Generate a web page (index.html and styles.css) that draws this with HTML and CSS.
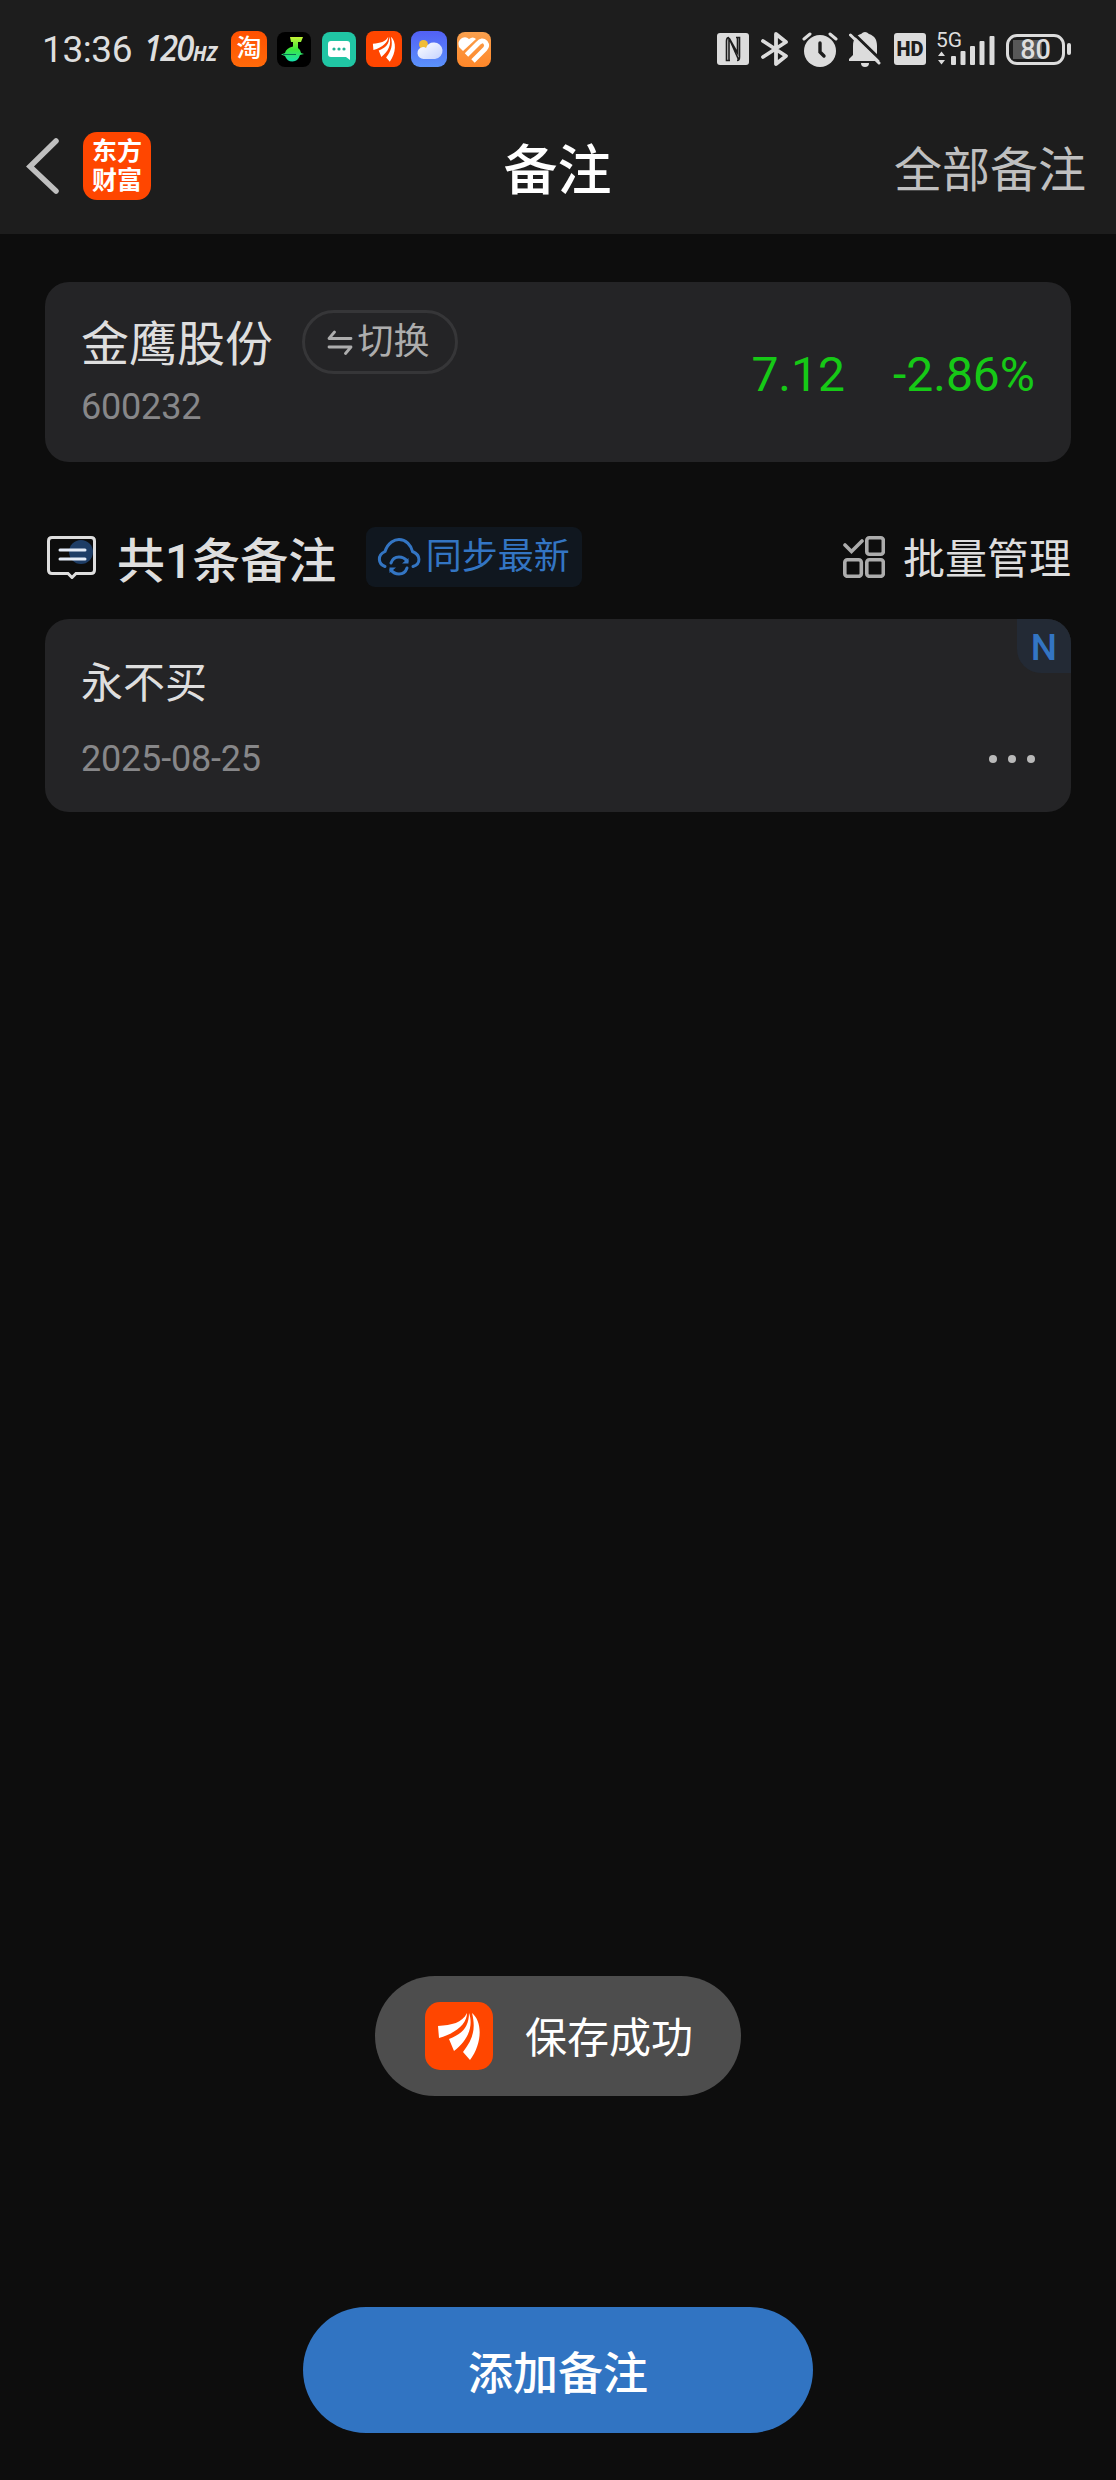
FILE: index.html
```html
<!DOCTYPE html>
<html lang="zh-CN">
  <head>
    <meta charset="UTF-8" />
    <meta name="viewport" content="width=device-width, initial-scale=1.0" />
    <title>备注</title>
    <link rel="stylesheet" href="styles.css">
  </head>
  <body>
    <div class="page">
      <header class="top">
        <div class="status-bar">
          <span class="time">13:36</span>
          <span class="rate">120<small>HZ</small></span>
          <div class="apps">
            <div class="app app-taobao">淘</div>
            <svg class="app" viewBox="0 0 36 36">
              <defs>
                <linearGradient id="note" x1="0" y1="0" x2="0" y2="1">
                  <stop offset="0" stop-color="#c6f536" />
                  <stop offset="0.500" stop-color="#3ee83c" />
                  <stop offset="1" stop-color="#16e0b0" />
                </linearGradient>
              </defs>
              <rect x="1" y="1" width="34" height="35" rx="8" fill="#000" />
              <path d="M14 6H27L25 11H22V17Q25 19 25 22L28 23L24 24Q22 30.500 16.500 30.500Q11 30.500 9 25L5 23.500L9 22Q10 17 17 15.500V11H15Z" fill="url(#note)" />
              <path d="M7 23.500H20" stroke="#087052" stroke-width="1" />
            </svg>
            <svg class="app" viewBox="0 0 36 36">
              <rect x="1" y="1" width="34" height="35" rx="8" fill="#20c6a4" />
              <path d="M10 10H26Q29 10 29 13V29L25 26H10Q7 26 7 23V13Q7 10 10 10Z" fill="#fff" />
              <g fill="#20b497">
                <circle cx="13" cy="18" r="1.600" />
                <circle cx="18" cy="18" r="1.600" />
                <circle cx="23" cy="18" r="1.600" />
              </g>
            </svg>
            <svg class="app" viewBox="0 0 68 68">
              <rect width="68" height="68" rx="15" fill="#ff4600" />
              <g id="wing" fill="#fff">
                <path d="M42 11C42 21 32 31 14 36L13 24C27 23 37 21 42 11Z" />
                <path d="M44 11C49 25 42 39 29 49L24 37C37 32 44 25 44 11Z" />
                <path d="M47 11C58 20 57 42 45 58L38 50C48 37 51 27 47 11Z" />
              </g>
            </svg>
            <svg class="app" viewBox="0 0 36 36">
              <defs>
                <linearGradient id="sky" x1="0" y1="0" x2="0" y2="1">
                  <stop offset="0" stop-color="#5260f5" />
                  <stop offset="1" stop-color="#5b92fb" />
                </linearGradient>
                <linearGradient id="cloud" x1="0" y1="0" x2="1" y2="1">
                  <stop offset="0" stop-color="#fff" />
                  <stop offset="1" stop-color="#c4d2ff" />
                </linearGradient>
              </defs>
              <rect width="36" height="36" rx="9" fill="url(#sky)" />
              <circle cx="12.500" cy="13.500" r="4.500" fill="#f0bd37" />
              <path d="M13 28A6 6 0 0 1 12 16Q14 16 15 17Q17 11.500 22.500 11.500A8 8 0 0 1 24 28Z" fill="url(#cloud)" />
            </svg>
            <svg class="app" viewBox="0 0 36 36">
              <defs>
                <linearGradient id="amber" x1="0" y1="0" x2="0" y2="1">
                  <stop offset="0" stop-color="#f9a04e" />
                  <stop offset="1" stop-color="#ff8729" />
                </linearGradient>
              </defs>
              <rect x="1" y="1" width="34" height="35" rx="8" fill="url(#amber)" />
              <path d="M3 16Q1 10 6 7Q10 5 13 8Q17 5 20 8L7 20Z" fill="#fff" />
              <path d="M10.500 24L22 12.500Q26 8 29.500 11.500Q32 15 29 18L17 30" fill="none" stroke="#fff" stroke-width="4.800" />
            </svg>
          </div>
          <div class="signals">
            <svg width="32" height="32" viewBox="0 0 32 32">
              <rect width="32" height="32" rx="3" fill="#dcdcdc" />
              <path d="M12 4.500Q9.500 4.500 9.500 8V27.500H13M12 27V5L21.500 26.500M19 4.500H22.500V24Q22.500 27.500 20 27.500M20.500 5V20L12 5" fill="none" stroke="#1d1d1d" stroke-width="1.600" />
            </svg>
            <svg class="bluetooth" width="28" height="34" viewBox="0 0 28 34">
              <path d="M2 9L25 24L15 32V2L25 10L2 25" fill="none" stroke="#dcdcdc" stroke-width="3.800" stroke-linecap="round" stroke-linejoin="round" />
            </svg>
            <svg class="alarm" width="36" height="35" viewBox="0 0 36 35">
              <circle cx="18" cy="19" r="16" fill="#dcdcdc" />
              <path d="M2 7L8 2M28 2L34 7" stroke="#dcdcdc" stroke-width="3" stroke-linecap="round" />
              <path d="M18 11V20L22 24" fill="none" stroke="#1d1d1d" stroke-width="3.400" stroke-linecap="round" />
            </svg>
            <svg class="bell" width="32" height="36" viewBox="0 0 32 36">
              <path d="M0 30V28L4 24V15C4 7 8 4 12 3Q16 -1 20 3C26 5 28 9 28 15V25L31 30Z" fill="#dcdcdc" />
              <path d="M12 32H20Q20 36 16 36Q12 36 12 32Z" fill="#dcdcdc" />
              <path d="M3 1L33 30" stroke="#1d1d1d" stroke-width="3" />
              <path d="M1.500 4L30 32" stroke="#dcdcdc" stroke-width="3" stroke-linecap="round" />
            </svg>
            <div class="hd">HD</div>
            <div class="cell">
              <span class="cell-type">5G</span>
              <svg width="60" height="34" viewBox="0 0 60 34">
                <g fill="#dcdcdc">
                  <path d="M1 24L4.500 19.500L8 24ZM1 28H8L4.500 32.500Z" />
                  <rect x="14" y="24" width="5" height="9" rx="1" />
                  <rect x="23.500" y="19" width="5" height="14" rx="1" />
                  <rect x="33" y="14" width="5" height="19" rx="1" />
                  <rect x="42.500" y="9" width="5" height="24" rx="1" />
                  <rect x="52.500" y="4" width="5" height="29" rx="1" />
                </g>
              </svg>
            </div>
            <div class="battery">80</div>
            <div class="battery-tip"></div>
          </div>
        </div>
        <nav class="nav">
          <div class="nav-left">
            <svg width="34" height="56" viewBox="0 0 34 56">
              <path d="M30 3L4 28.500L30 53" fill="none" stroke="#bfbfbf" stroke-width="5.500" stroke-linecap="round" />
            </svg>
            <div class="brand">东方<br />财富</div>
          </div>
          <h1 class="nav-title">备注</h1>
          <div class="nav-right">全部备注</div>
        </nav>
      </header>

      <main class="content">
        <section class="card stock">
          <div class="stock-info">
            <div class="stock-head">
              <span class="stock-name">金鹰股份</span>
              <div class="switch">
                <svg width="26" height="26" viewBox="0 0 26 26">
                  <path d="M24 9.500H2L7.500 3M2 18H24L18.500 24.500" fill="none" stroke="#adadad" stroke-width="2.800" stroke-linecap="round" stroke-linejoin="round" />
                </svg>
                <span>切换</span>
              </div>
            </div>
            <div class="stock-code">600232</div>
          </div>
          <div class="quote">
            <span>7.12</span>
            <span>-2.86%</span>
          </div>
        </section>

        <div class="toolbar">
          <svg class="bubble" width="50" height="44" viewBox="0 0 50 44">
            <circle cx="34" cy="17" r="12" fill="#1e3d66" />
            <path d="M5 2.500H44Q47.500 2.500 47.500 6V35Q47.500 38.500 44 38.500H29L25 42.500L21 38.500H5Q1.500 38.500 1.500 35V6Q1.500 2.500 5 2.500Z" fill="none" stroke="#dedede" stroke-width="3" />
            <path d="M13 15H38M13 24H38" stroke="#e3ebf7" stroke-width="3" stroke-linecap="round" />
          </svg>
          <h2 class="count">共1条备注</h2>
          <div class="sync">
            <svg width="44" height="40" viewBox="0 0 44 40">
              <g fill="none" stroke="#3375c3" stroke-width="3" stroke-linecap="round">
                <path d="M8 29.500C1 27 0 18 8 14.500C11 5 18 2.500 22 2.500C29 2.500 34 8 35.500 14.500C44 18 44 27 36 29.500" />
                <path d="M14 26Q16 20 22 20Q27 20 30 24M30 31Q28 37 22 37Q17 37 14 33" />
              </g>
              <path d="M31.500 21V26.500H25ZM12.500 36V30.500H19Z" fill="#3375c3" />
            </svg>
            <span>同步最新</span>
          </div>
          <div class="batch">
            <svg width="42" height="42" viewBox="0 0 42 42">
              <g fill="none" stroke="#acacac" stroke-width="3.600">
                <path d="M2 9L8.500 15.500L19 5" stroke-linecap="round" />
                <rect x="23.800" y="1.800" width="16.500" height="16.500" rx="2.500" />
                <rect x="1.800" y="23.800" width="16.500" height="16.500" rx="2.500" />
                <rect x="23.800" y="23.800" width="16.500" height="16.500" rx="2.500" />
              </g>
            </svg>
            <span>批量管理</span>
          </div>
        </div>

        <section class="card note">
          <div class="note-tag">N</div>
          <p class="note-text">永不买</p>
          <div class="note-foot">
            <span>2025-08-25</span>
            <div class="more"><i></i><i></i><i></i></div>
          </div>
        </section>
      </main>

      <div class="toast">
        <svg width="68" height="68" viewBox="0 0 68 68">
          <rect width="68" height="68" rx="15" fill="#ff4600" />
          <use href="#wing" />
        </svg>
        <span>保存成功</span>
      </div>

      <button class="add">添加备注</button>
    </div>
  </body>
</html>
```

FILE: styles.css
```css
* {
  box-sizing: border-box;
}
body {
  margin: 0;
  background-color: #0d0d0d;
  font-family: Roboto, "Noto Sans CJK SC", sans-serif;
  color: #dedede;
}
svg {
  display: block;
  flex-shrink: 0;
}
h1,
h2,
p {
  margin: 0;
}
.page {
  height: 2480px;
  display: flex;
  flex-direction: column;
  align-items: center;
}
.top {
  width: 100%;
  height: 234px;
  background-color: #1d1d1d;
}
.status-bar {
  height: 98px;
  padding: 0 45px 0 42px;
  display: flex;
  align-items: center;
}
.time {
  width: 102px;
  font-size: 37px;
  letter-spacing: -0.4px;
}
.rate {
  width: 87px;
  padding-top: 2px;
  font-family: "Open Sans", sans-serif;
  font-size: 36px;
  font-style: italic;
  font-weight: 600;
  letter-spacing: -1.8px;
  line-height: 40px;
  white-space: nowrap;
  transform: scaleX(0.9);
  transform-origin: left;
}
.rate small {
  font-size: 22px;
  font-weight: 700;
  letter-spacing: 0;
}
.apps {
  display: flex;
  gap: 9px;
}
.app {
  width: 36px;
  height: 36px;
}
.app-taobao {
  border-radius: 9px;
  background: linear-gradient(#ff5000, #ff6a0a);
  color: #fff;
  font-size: 25px;
  font-weight: 500;
  line-height: 35px;
  text-align: center;
}
.signals {
  margin-left: auto;
  display: flex;
  align-items: center;
}
.bluetooth {
  margin-left: 12px;
}
.alarm {
  margin-left: 13px;
}
.bell {
  margin: 0 13px 0 11px;
}
.hd {
  width: 32px;
  height: 32px;
  border-radius: 3px;
  background-color: #dcdcdc;
  color: #1d1d1d;
  font-size: 20px;
  font-weight: 900;
  line-height: 33px;
  text-align: center;
}
.cell {
  position: relative;
  margin: 0 9px 0 11px;
}
.cell-type {
  position: absolute;
  left: -1px;
  top: -3px;
  font-size: 21px;
  line-height: 22px;
}
.battery {
  width: 59px;
  height: 31px;
  border: 3px solid #dcdcdc;
  border-radius: 11px;
  background: linear-gradient(#585858, #585858) 4px center / 29px 19px no-repeat;
  font-size: 27px;
  font-weight: 500;
  line-height: 26px;
  text-align: center;
}
.battery-tip {
  width: 4px;
  height: 12px;
  margin-left: 2px;
  border-radius: 2px;
  background-color: #dcdcdc;
}
.nav {
  height: 136px;
  padding: 0 30px 0 26px;
  display: flex;
  align-items: center;
}
.nav-left {
  flex: 1;
  display: flex;
  align-items: center;
  gap: 23px;
}
.brand {
  width: 68px;
  height: 68px;
  padding-top: 5px;
  border-radius: 14px;
  background-color: #ff4600;
  color: #fff;
  font-size: 25px;
  font-weight: 700;
  line-height: 29px;
  text-align: center;
}
.nav-title {
  padding: 12px 0 0 3px;
  color: #fff;
  font-size: 54px;
  font-weight: 500;
  line-height: 60px;
}
.nav-right {
  flex: 1;
  padding-top: 10px;
  color: #bfbfbf;
  font-size: 48px;
  line-height: 60px;
  text-align: right;
}
.content {
  width: 100%;
  padding: 48px 45px 0;
}
.card {
  border-radius: 24px;
  background-color: #242426;
}
.stock {
  height: 180px;
  padding: 28px 36px 0;
  display: flex;
  justify-content: space-between;
}
.stock-head {
  height: 64px;
  display: flex;
  align-items: center;
  gap: 29px;
}
.stock-name {
  font-size: 48px;
  line-height: 60px;
  padding-top: 5px;
}
.switch {
  width: 156px;
  height: 64px;
  padding-right: 4px;
  border: 3px solid #363638;
  border-radius: 32px;
  display: flex;
  align-items: center;
  justify-content: center;
  gap: 5px;
  color: #adadad;
  font-size: 36px;
  line-height: 60px;
}
.stock-code {
  margin-top: 10px;
  color: #878789;
  font-size: 36px;
  line-height: 46px;
  letter-spacing: -0.2px;
}
.quote {
  padding-top: 35px;
  display: flex;
  gap: 48px;
  color: #16c916;
  font-size: 48px;
  line-height: 60px;
}
.toolbar {
  height: 60px;
  margin: 65px 0 32px;
  display: flex;
  align-items: center;
}
.bubble {
  margin-left: 2px;
}
.count {
  margin-left: 20px;
  padding-top: 10px;
  font-size: 48px;
  font-weight: 500;
  line-height: 60px;
}
.sync {
  width: 216px;
  height: 60px;
  margin-left: 30px;
  padding-right: 2px;
  border-radius: 9px;
  background-color: #10171f;
  display: flex;
  align-items: center;
  justify-content: center;
  gap: 5px;
  color: #3375c3;
  font-size: 36px;
  line-height: 62px;
}
.batch {
  margin-left: auto;
  display: flex;
  align-items: center;
  gap: 18px;
  font-size: 42px;
  line-height: 60px;
}
.batch span {
  padding-top: 6px;
}
.note {
  position: relative;
  height: 193px;
  padding: 37px 36px 0;
  overflow: hidden;
}
.note-tag {
  position: absolute;
  top: 0;
  right: 0;
  width: 54px;
  height: 54px;
  border-bottom-left-radius: 24px;
  background-color: #232a35;
  color: #3375c3;
  font-size: 37px;
  font-weight: 500;
  line-height: 58px;
  text-align: center;
}
.note-text {
  font-size: 42px;
  line-height: 56px;
}
.note-foot {
  margin-top: 23px;
  display: flex;
  align-items: center;
  justify-content: space-between;
  color: #878789;
  font-size: 36px;
  line-height: 48px;
  letter-spacing: -0.2px;
}
.more {
  display: flex;
  gap: 11px;
}
.more i {
  width: 8px;
  height: 8px;
  border-radius: 50%;
  background-color: #b9b9b9;
}
.toast {
  width: 366px;
  height: 120px;
  margin-top: auto;
  padding: 0 0 1px 50px;
  border-radius: 60px;
  background-color: #4d4d4d;
  display: flex;
  align-items: center;
  gap: 32px;
  color: #fff;
  font-size: 42px;
  line-height: 60px;
}
.toast span {
  padding-top: 7px;
}
.add {
  width: 510px;
  height: 126px;
  margin: 211px 0 47px;
  border: none;
  border-radius: 63px;
  background-color: #3174c2;
  color: #fff;
  font-family: inherit;
  font-size: 45px;
  font-weight: 500;
  line-height: 60px;
  padding: 9px 0 0;
}
```
